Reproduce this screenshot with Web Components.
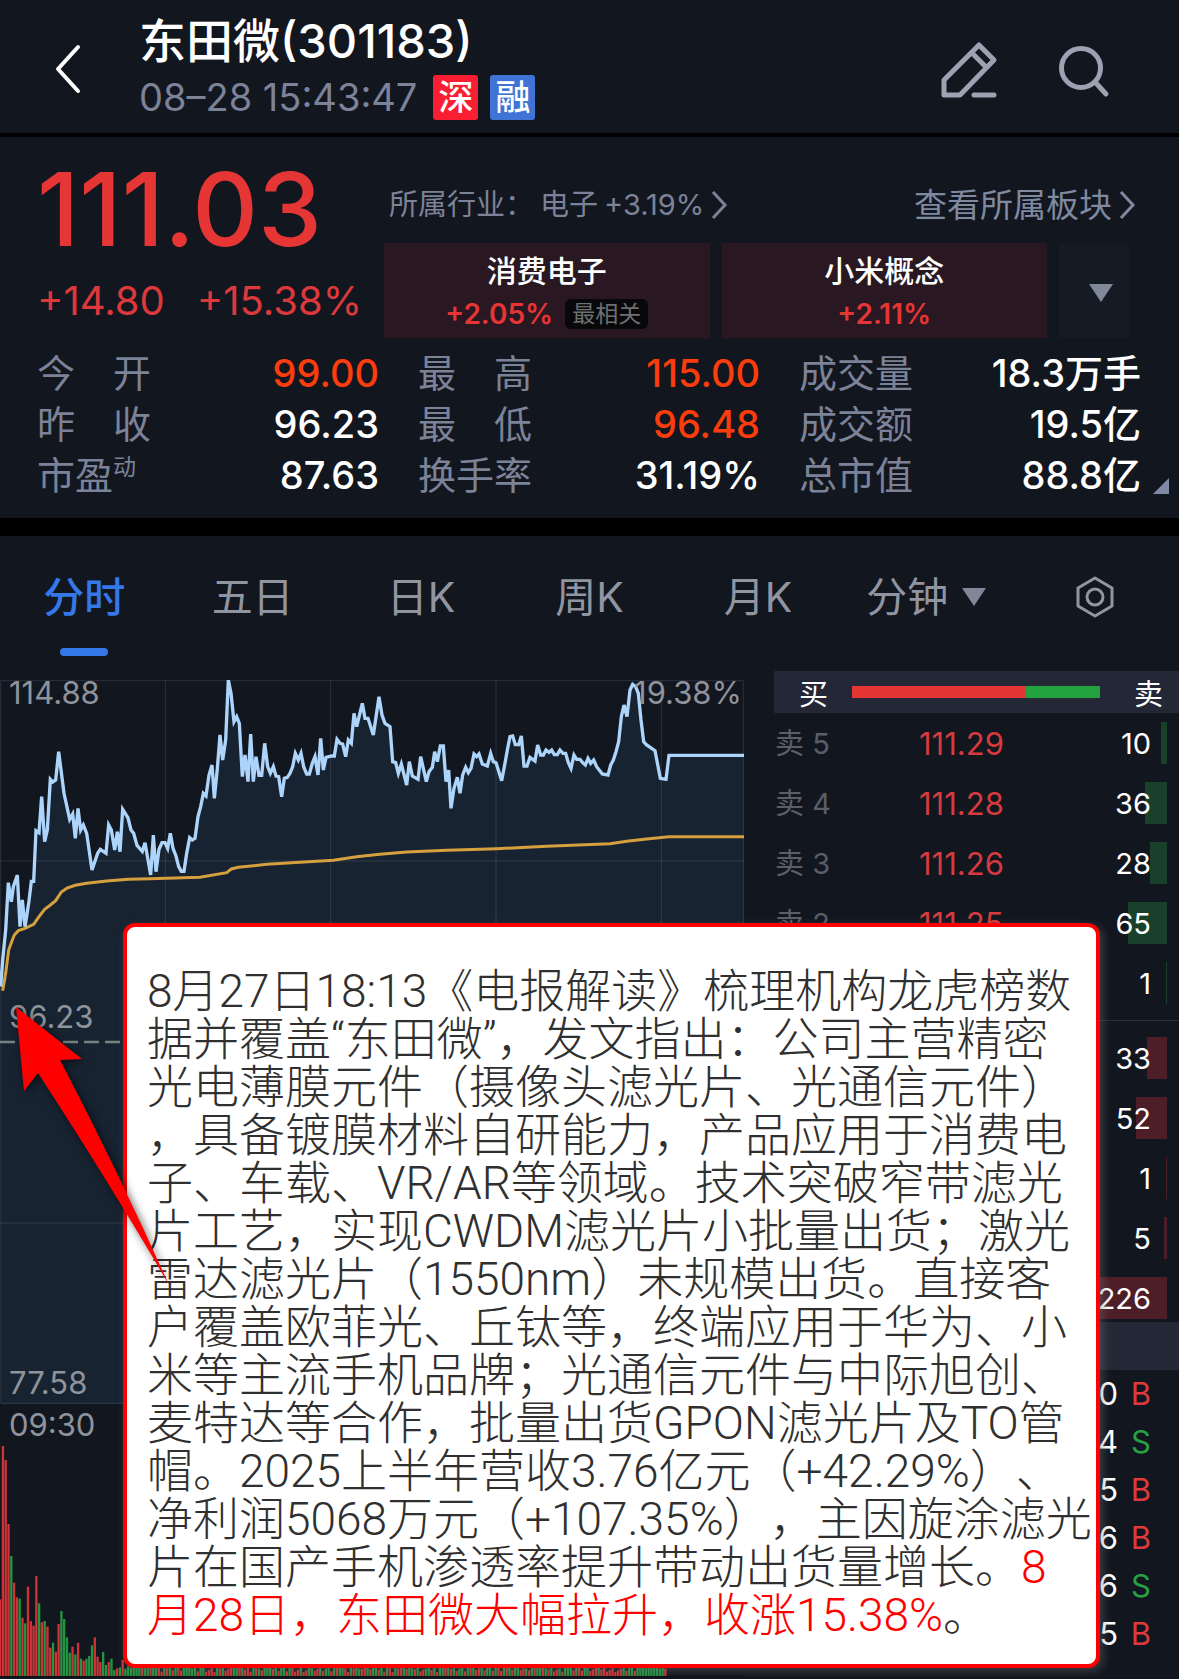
<!DOCTYPE html>
<html lang="zh-CN">
<head>
<meta charset="utf-8">
<meta name="viewport" content="width=device-width, initial-scale=1">
<title>东田微(301183)</title>
<style>
    body {
        margin: 0;
        min-height: 100vh;
        background: #12161f;
        color: #fff;
        font-family: Inter, "Noto Sans CJK SC", sans-serif;
        --up: #e53535;
        --down: #22a33f;
        --muted: #7c8297;
    }
</style>
</head>
<body>

<stock-page>
    <stock-header slot="header" name="东田微" code="301183" time="08–28 15:43:47">
        <market-badge>深</market-badge>
        <market-badge color="#3f74d6">融</market-badge>
    </stock-header>

    <price-panel slot="price" price="111.03" change="+14.80" percent="+15.38%">
        <sector-card name="消费电子" percent="+2.05%" tag="最相关"></sector-card>
        <sector-card name="小米概念" percent="+2.11%"></sector-card>
        <stat-item slot="stats" label="今　开" tone="up">99.00</stat-item>
        <stat-item slot="stats" label="最　高" tone="up">115.00</stat-item>
        <stat-item slot="stats" label="成交量">18.3万手</stat-item>
        <stat-item slot="stats" label="昨　收">96.23</stat-item>
        <stat-item slot="stats" label="最　低" tone="up">96.48</stat-item>
        <stat-item slot="stats" label="成交额">19.5亿</stat-item>
        <stat-item slot="stats" label="市盈" sup="动">87.63</stat-item>
        <stat-item slot="stats" label="换手率">31.19%</stat-item>
        <stat-item slot="stats" label="总市值">88.8亿</stat-item>
    </price-panel>

    <chart-tabs slot="tabs"></chart-tabs>
    <minute-chart slot="chart"></minute-chart>
    <order-book slot="book"></order-book>

    <note-callout slot="note">8月27日18:13《电报解读》梳理机构龙虎榜数
据并覆盖“东田微”，发文指出：公司主营精密
光电薄膜元件（摄像头滤光片、光通信元件）
，具备镀膜材料自研能力，产品应用于消费电
子、车载、VR/AR等领域。技术突破窄带滤光
片工艺，实现CWDM滤光片小批量出货；激光
雷达滤光片（1550nm）未规模出货。直接客
户覆盖欧菲光、丘钛等，终端应用于华为、小
米等主流手机品牌；光通信元件与中际旭创、
麦特达等合作，批量出货GPON滤光片及TO管
帽。2025上半年营收3.76亿元（+42.29%）、
净利润5068万元（+107.35%），主因旋涂滤光
片在国产手机渗透率提升带动出货量增长。<mark>8</mark>
<mark>月28日，东田微大幅拉升，收涨15.38%</mark>。</note-callout>
    <note-arrow slot="note"></note-arrow>
</stock-page>

<script>
(() => {

    function attach(el, html) {
        const template = document.createElement('template');
        template.innerHTML = html;
        el.attachShadow({mode: 'open'});
        el.shadowRoot.appendChild(template.content.cloneNode(true));
    }

    window.customElements.define('stock-page',

    class StockPage extends HTMLElement {
        constructor() {
            super();
            attach(this, `
                <style>
                    :host {
                        display: block;
                        position: relative;
                        overflow: hidden;
                    }
                    .panels {
                        display: grid;
                        grid-template-columns: minmax(0, 744fr) minmax(0, 405fr);
                        column-gap: 30px;
                    }
                </style>
                <slot name="header"></slot>
                <slot name="price"></slot>
                <slot name="tabs"></slot>
                <div class="panels">
                    <slot name="chart"></slot>
                    <slot name="book"></slot>
                </div>
                <slot name="note"></slot>
            `);
        }
    });

    window.customElements.define('market-badge',

    class MarketBadge extends HTMLElement {
        constructor() {
            super();
            attach(this, `
                <style>
                    :host {
                        display: block;
                        width: 45px;
                        border-radius: 3px;
                        background: ${this.getAttribute('color') || '#fa1e32'};
                        color: #fff;
                        font-size: 35px;
                        font-weight: 500;
                        line-height: 45px;
                        text-align: center;
                    }
                </style>
                <slot></slot>
            `);
        }
    });

    window.customElements.define('stock-header',

    class StockHeader extends HTMLElement {
        constructor() {
            super();
            attach(this, `
                <style>
                    :host {
                        display: flex;
                        align-items: center;
                        height: 133px;
                        padding: 0 67px 0 52px;
                        border-bottom: 4px solid #000;
                    }
                    button {
                        display: block;
                        padding: 0;
                        border: 0;
                        background: none;
                        color: #9ea1b1;
                    }
                    svg {
                        display: block;
                        fill: none;
                        stroke: currentColor;
                        stroke-width: 5;
                        stroke-linecap: round;
                        stroke-linejoin: round;
                    }
                    .back {
                        color: #fff;
                        margin-right: 55px;
                    }
                    .back svg {
                        stroke-width: 4;
                    }
                    .title {
                        flex: 1;
                    }
                    h1 {
                        margin: 0 0 6px;
                        font-size: 47px;
                        font-weight: 500;
                        line-height: 56px;
                    }
                    .sub {
                        display: flex;
                        align-items: center;
                        gap: 12px;
                    }
                    time {
                        margin-right: 4px;
                        color: var(--muted);
                        font-size: 38px;
                        line-height: 45px;
                    }
                    .edit {
                        margin-right: 58px;
                    }
                </style>
                <button class="back" aria-label="返回">
                    <svg width="32" height="56" viewBox="0 0 32 56"><path d="M26 8 6 30 26 52"/></svg>
                </button>
                <div class="title">
                    <h1>${this.getAttribute('name')}(${this.getAttribute('code')})</h1>
                    <div class="sub">
                        <time>${this.getAttribute('time')}</time>
                        <slot></slot>
                    </div>
                </div>
                <button class="edit" aria-label="编辑">
                    <svg width="58" height="64" viewBox="0 0 58 64"><path d="M4 60V45L39 10 54 25 20 60ZM32 18 46 32M34 60H54"/></svg>
                </button>
                <button aria-label="搜索">
                    <svg width="56" height="64" viewBox="0 0 56 64"><circle cx="25" cy="33" r="19.5"/><path d="M39 47 50 59"/></svg>
                </button>
            `);
        }
    });

    window.customElements.define('sector-card',

    class SectorCard extends HTMLElement {
        constructor() {
            super();
            const tag = this.getAttribute('tag');
            attach(this, `
                <style>
                    :host {
                        display: block;
                    }
                    a {
                        display: block;
                        height: 95px;
                        box-sizing: border-box;
                        padding-top: 8px;
                        background: #291822;
                        color: #fff;
                        font-size: 30px;
                        font-weight: 500;
                        line-height: 40px;
                        text-align: center;
                        text-decoration: none;
                    }
                    .row {
                        display: flex;
                        justify-content: center;
                        align-items: center;
                        gap: 12px;
                        height: 45px;
                        color: var(--up);
                        font-size: 28px;
                        font-weight: 600;
                    }
                    .tag {
                        padding: 0 7px;
                        border-radius: 6px;
                        background: #08070a;
                        color: #6d7071;
                        font-size: 23px;
                        font-weight: 400;
                        line-height: 30px;
                    }
                </style>
                <a href="#">
                    ${this.getAttribute('name')}
                    <div class="row"><span>${this.getAttribute('percent')}</span>${tag ? `<span class="tag">${tag}</span>` : ''}</div>
                </a>
            `);
        }
    });

    window.customElements.define('stat-item',

    class StatItem extends HTMLElement {
        constructor() {
            super();
            attach(this, `
                <style>
                    :host {
                        display: flex;
                        justify-content: space-between;
                        font-size: 38px;
                        line-height: 51px;
                    }
                    .label {
                        color: var(--muted);
                    }
                    sup {
                        font-size: 23px;
                        line-height: 0;
                    }
                    .value {
                        font-weight: 500;
                    }
                    :host([tone="up"]) .value {
                        color: #fb3c0c;
                    }
                </style>
                <span class="label">${this.getAttribute('label')}<sup>${this.getAttribute('sup') || ''}</sup></span>
                <span class="value"><slot></slot></span>
            `);
        }
    });

    window.customElements.define('price-panel',

    class PricePanel extends HTMLElement {
        constructor() {
            super();
            attach(this, `
                <style>
                    :host {
                        display: block;
                        position: relative;
                        padding: 22px 38px 17px 37px;
                        border-bottom: 18px solid #000;
                    }
                    .top {
                        display: grid;
                        grid-template-columns: 347px minmax(0, 1fr);
                        margin-bottom: 10px;
                    }
                    .price {
                        color: var(--up);
                        font-size: 102px;
                        font-weight: 500;
                        line-height: 100px;
                    }
                    .change {
                        display: flex;
                        gap: 32px;
                        margin-top: 12px;
                        color: #dd393c;
                        font-size: 40px;
                        line-height: 60px;
                    }
                    .links {
                        display: flex;
                        justify-content: space-between;
                        margin: 26px 5px 18px 5px;
                        line-height: 40px;
                    }
                    .links a {
                        display: flex;
                        align-items: center;
                        gap: 6px;
                        color: var(--muted);
                        text-decoration: none;
                        font-size: 29px;
                    }
                    .links .all {
                        color: #7f89a0;
                        font-size: 33px;
                    }
                    svg {
                        display: block;
                        fill: none;
                        stroke: currentColor;
                        stroke-width: 3;
                    }
                    .cards {
                        display: grid;
                        grid-template-columns: 1fr 1fr 70px;
                        gap: 12px;
                        margin-right: 12px;
                    }
                    .more {
                        display: flex;
                        align-items: center;
                        justify-content: center;
                        padding: 4px 0 0 14px;
                        border: 0;
                        background: #141b24;
                        color: #7f8798;
                    }
                    .more svg {
                        fill: currentColor;
                        stroke: none;
                    }
                    .stats {
                        display: grid;
                        grid-template-columns: repeat(3, minmax(0, 1fr));
                        column-gap: 39px;
                    }
                    .corner {
                        position: absolute;
                        right: 10px;
                        bottom: 24px;
                        border: 8px solid #8089a6;
                        border-left-color: transparent;
                        border-top-color: transparent;
                    }
                </style>
                <div class="top">
                    <div>
                        <div class="price">${this.getAttribute('price')}</div>
                        <div class="change"><span>${this.getAttribute('change')}</span><span>${this.getAttribute('percent')}</span></div>
                    </div>
                    <div>
                        <div class="links">
                            <a href="#"><span>所属行业：</span><span>电子</span><span>+3.19%</span>
                                <svg width="18" height="30" viewBox="0 0 18 30"><path d="M3 2 15 15 3 28"/></svg></a>
                            <a href="#" class="all"><span>查看所属板块</span>
                                <svg width="18" height="30" viewBox="0 0 18 30"><path d="M3 2 15 15 3 28"/></svg></a>
                        </div>
                        <div class="cards">
                            <slot></slot>
                            <button class="more" aria-label="展开"><svg width="26" height="20" viewBox="0 0 26 20"><path d="M1 1H25L13 19Z"/></svg></button>
                        </div>
                    </div>
                </div>
                <div class="stats"><slot name="stats"></slot></div>
                <span class="corner"></span>
            `);
        }
    });

    window.customElements.define('chart-tabs',

    class ChartTabs extends HTMLElement {
        constructor() {
            super();
            attach(this, `
                <style>
                    :host {
                        display: grid;
                        grid-template-columns: repeat(7, minmax(0, 1fr));
                        height: 135px;
                    }
                    button {
                        display: flex;
                        justify-content: center;
                        align-items: center;
                        gap: 14px;
                        height: 122px;
                        padding: 0;
                        border: 0;
                        background: none;
                        color: #9195a1;
                        font: inherit;
                        font-size: 41px;
                        line-height: 60px;
                        white-space: nowrap;
                    }
                    button.active {
                        position: relative;
                        color: #3478ea;
                        font-weight: 500;
                    }
                    button.active::after {
                        content: "";
                        position: absolute;
                        bottom: 2px;
                        width: 48px;
                        height: 8px;
                        border-radius: 4px;
                        background: #3478ea;
                    }
                    svg {
                        fill: none;
                        stroke: currentColor;
                        stroke-width: 3;
                        stroke-linejoin: round;
                    }
                    .arrow {
                        fill: #7f8798;
                        stroke: none;
                    }
                </style>
                <button class="active">分时</button>
                <button>五日</button>
                <button>日K</button>
                <button>周K</button>
                <button>月K</button>
                <button>分钟<svg class="arrow" width="24" height="20" viewBox="0 0 24 20"><path d="M0 1H24L12 19Z"/></svg></button>
                <button aria-label="设置"><svg width="42" height="44" viewBox="0 0 42 44"><path d="M21 3 38 13V31L21 41 4 31V13Z"/><circle cx="21" cy="22" r="8"/></svg></button>
            `);
        }
    });

    const PRICE = '2,980 8,900 17,810 25,668 34,725 40,680 52,645 60,800 67,720 75,800 86,730 94,664 101,664 108,512 117,518 125,410 134,545 142,510 151,358 158,366 167,360 176,275 192,400 209,478 218,462 226,535 234,445 242,510 250,495 260,520 276,630 293,580 301,568 318,580 326,495 334,510 344,570 352,515 360,575 368,448 384,474 393,510 401,520 411,556 427,574 435,548 452,645 460,525 468,635 477,568 486,548 495,548 503,565 511,520 519,565 528,588 536,620 544,634 552,634 560,580 569,533 577,540 585,535 594,470 602,440 610,400 618,408 627,345 636,315 643,415 652,325 660,225 668,300 677,240 685,60 693,100 702,185 710,170 718,190 727,350 735,285 744,365 752,222 760,365 768,290 777,346 785,346 794,250 803,320 811,340 820,320 828,348 836,350 845,410 853,355 862,352 870,340 878,320 886,280 895,300 903,280 911,320 920,342 928,342 937,310 945,290 954,345 962,235 970,330 978,292 995,288 1003,288 1011,238 1020,250 1028,252 1037,290 1045,240 1054,250 1062,160 1070,200 1087,130 1095,175 1104,175 1120,225 1137,110 1146,165 1155,190 1170,200 1178,305 1187,308 1195,340 1204,312 1220,375 1228,305 1237,348 1254,358 1262,290 1279,365 1287,335 1297,322 1304,275 1312,305 1321,258 1330,258 1338,365 1346,330 1353,445 1362,385 1372,352 1380,400 1388,345 1397,322 1405,338 1413,325 1422,282 1430,290 1437,282 1447,312 1462,318 1472,280 1480,305 1488,308 1505,362 1514,315 1522,270 1530,230 1538,228 1546,254 1556,254 1564,228 1572,318 1581,318 1590,292 1605,303 1613,255 1622,285 1630,285 1638,270 1647,277 1655,270 1663,284 1672,284 1680,270 1689,280 1697,280 1705,308 1713,325 1722,285 1730,298 1740,298 1748,308 1756,315 1764,295 1772,310 1781,300 1790,320 1807,342 1824,345 1832,315 1840,300 1848,275 1856,245 1864,170 1872,135 1881,170 1890,90 1898,73 1907,80 1915,100 1923,180 1931,245 1940,255 1965,272 1981,355 1998,358 2007,286 2232,286';
    const AVERAGE = '8,992 17,940 26,870 35,845 43,825 55,812 75,805 101,793 117,770 134,748 151,735 167,722 184,696 201,684 226,676 260,670 320,663 384,658 450,656 600,652 680,638 694,627 715,622 800,613 1000,601 1070,590 1140,583 1220,576 1340,571 1490,566 1640,559 1830,551 1880,544 1940,537 2007,530 2232,530';

    // bar heights in chart units, r = up minute, g = down minute
    const VOLUME = 'r230 r690 r648 r456 g360 r280 r236 g232 r175 g158 r268 r165 r151 r300 g218 r161 g165 r148 r85 g100 r73 r156 g195 g171 g116 g70 r88 g65 r100 g52 r46 g52 g60 g92 r116 r58 r42 g72 g33 r42 g52 g18 r23 g26 r48'.split(' ');
    const REST = 'ggggggrggrggrrgrgrgrrgggggrggrrrrgrgrrrggrgrrrgrgrgggrgrggrgrrrgrrggrrgrggrgrggrrgrggrrgrggrgrgrrgrrgrggrgrrggrgrggrgrgrggrgrgrrgrggrgrrgrgrggrrgrgrggrgrgrrgrgggrgrrggrrrgrrrrrrrrgrggrggggggggggr';
    [...REST].forEach((c, i) => VOLUME.push(c + (c === 'g' ? 22 + i * 7 % 12 : 12 + i * 5 % 16)));

    window.customElements.define('minute-chart',

    class MinuteChart extends HTMLElement {
        constructor() {
            super();
            attach(this, `
                <style>
                    :host {
                        display: block;
                        position: relative;
                        margin-top: 9px;
                        color: #8f939c;
                        font-size: 31px;
                        line-height: 30px;
                    }
                    svg {
                        display: block;
                        width: 100%;
                    }
                    .price {
                        height: 724px;
                    }
                    .volume {
                        height: 272px;
                        border-bottom: 1px solid #090c12;
                    }
                    .grid {
                        fill: none;
                        stroke: #a8bdd0;
                        stroke-opacity: .16;
                        stroke-width: 3;
                    }
                    span {
                        position: absolute;
                        left: 9px;
                    }
                    .high, .percent {
                        top: -2px;
                    }
                    span.percent {
                        left: auto;
                        right: 2px;
                    }
                    .close {
                        top: 322px;
                    }
                    .low {
                        top: 688px;
                    }
                    .start {
                        top: 730px;
                    }
                </style>
                <svg class="price" viewBox="0 60 2232 2172" preserveAspectRatio="none">
                    <path fill="#172331" d="M2 2232V980L${PRICE}V2232Z"/>
                    <path class="grid" d="M2 62H2230V2230H2ZM496 60V2232M992 60V2232M1488 60V2232M1984 60V2232M0 603H2232M0 1689H2232"/>
                    <path fill="none" stroke="#76837f" stroke-width="7" stroke-dasharray="45 18" d="M0 1146H2232"/>
                    <polyline fill="none" stroke="#d6a03e" stroke-width="9" points="${AVERAGE}"/>
                    <polyline fill="none" stroke="#add5fb" stroke-width="10" points="${PRICE}"/>
                </svg>
                <svg class="volume" viewBox="0 0 2232 816" preserveAspectRatio="none"></svg>
                <span class="high">114.88</span>
                <span class="percent">19.38%</span>
                <span class="close">96.23</span>
                <span class="low">77.58</span>
                <span class="start">09:30</span>
            `);
            this.shadowRoot.querySelector('.volume').innerHTML = VOLUME.map((bar, i) => {
                const height = +bar.slice(1);
                const color = bar[0] === 'r' ? '#cf3336' : '#239540';
                return `<rect x="${i * 8.35 - 3}" y="${816 - height}" width="7" height="${height}" fill="${color}"/>`;
            }).join('');
        }
    });

    // label, price, lots, depth bar width
    const SELLS = [['卖 5', '111.29', 10, 6], ['卖 4', '111.28', 36, 22], ['卖 3', '111.26', 28, 17], ['卖 2', '111.25', 65, 39], ['', '', 1, 1]];
    const BUYS = [['', '', 33, 20], ['', '', 52, 31], ['', '', 1, 1], ['', '', 5, 3], ['', '', 226, 136]];
    const TRADES = [[0, 'B'], [4, 'S'], [5, 'B'], [6, 'B'], [6, 'S'], [5, 'B']];

    window.customElements.define('order-book',

    class OrderBook extends HTMLElement {
        constructor() {
            super();
            attach(this, `
                <style>
                    :host {
                        display: block;
                        font-size: 29px;
                    }
                    .ratio {
                        display: flex;
                        align-items: center;
                        height: 42px;
                        padding: 0 16px 0 25px;
                        margin-bottom: 9px;
                        background: #242836;
                    }
                    .bar {
                        flex: 1;
                        height: 12px;
                        margin: 0 34px 0 24px;
                        background: linear-gradient(to right, var(--up) 70%, var(--down) 70%);
                    }
                    table {
                        width: 100%;
                        border-spacing: 0;
                        table-layout: fixed;
                    }
                    td {
                        height: 60px;
                        padding: 0;
                        line-height: 44px;
                        vertical-align: top;
                    }
                    .depth tr:last-child td {
                        height: 42px;
                    }
                    .label {
                        width: 120px;
                        padding-left: 1px;
                        color: #5a5e68;
                    }
                    .quote {
                        width: 170px;
                        color: #d83a3d;
                        font-size: 31px;
                        text-indent: 24px;
                    }
                    .lots {
                        padding-right: 12px;
                    }
                    .lots div {
                        height: 42px;
                        padding-right: 16px;
                        text-align: right;
                        background: linear-gradient(var(--tone), var(--tone)) right / var(--depth) 100% no-repeat;
                    }
                    .sell {
                        --tone: #18402b;
                    }
                    .buy {
                        --tone: #4e1e28;
                        margin: 16px 0 3px;
                        padding-top: 16px;
                        border-top: 1px solid #2a2f38;
                    }
                    .band {
                        height: 48px;
                        background: #242836;
                    }
                    .trades td {
                        height: 48px;
                        padding-right: 12px;
                        font-size: 31px;
                        line-height: 48px;
                        text-align: right;
                    }
                    .trades td + td {
                        width: 21px;
                        padding-right: 28px;
                    }
                    .B { color: #dd3a3d; }
                    .S { color: #27a144; }
                </style>
                <div class="ratio"><span>买</span><div class="bar"></div><span>卖</span></div>
                <div class="depth sell"><table>${this.rows(SELLS)}</table></div>
                <div class="depth buy"><table>${this.rows(BUYS)}</table></div>
                <div class="band"></div>
                <table class="trades">${TRADES.map(([lots, side]) => `<tr><td>${lots}</td><td class="${side}">${side}</td></tr>`).join('')}</table>
            `);
        }

        rows(list) {
            return list.map(([label, price, lots, depth]) => `
                <tr>
                    <td class="label">${label}</td>
                    <td class="quote">${price}</td>
                    <td class="lots"><div style="--depth: ${depth}px">${lots}</div></td>
                </tr>
            `).join('');
        }
    });

    window.customElements.define('note-callout',

    class NoteCallout extends HTMLElement {
        constructor() {
            super();
            attach(this, `
                <style>
                    :host {
                        display: block;
                        position: absolute;
                        top: 923px;
                        left: 123px;
                        right: 79px;
                        box-sizing: border-box;
                        padding: 40px 0 25px 20px;
                        border: 4px solid #f00;
                        border-radius: 12px;
                        background: #fff;
                        box-shadow: 3px 3px 10px rgba(110, 110, 110, .45);
                        color: #303030;
                        font-family: Roboto, "Noto Sans CJK SC", sans-serif;
                        font-size: 46px;
                        font-weight: 300;
                        line-height: 48px;
                        text-spacing-trim: space-all;
                    }
                    .text {
                        white-space: pre;
                    }
                    ::slotted(mark) {
                        background: none;
                        color: #f00;
                    }
                </style>
                <div class="text"><slot></slot></div>
            `);
        }
    });

    window.customElements.define('note-arrow',

    class NoteArrow extends HTMLElement {
        constructor() {
            super();
            attach(this, `
                <style>
                    :host {
                        position: absolute;
                        top: 1007px;
                        left: 16px;
                    }
                    svg {
                        display: block;
                        overflow: visible;
                        fill: #f00;
                        filter: drop-shadow(2px 2px 4px rgba(0, 0, 0, .6));
                    }
                </style>
                <svg width="153" height="278" viewBox="0 0 153 278"><path d="M0 0 66 52 44 53Q104 168 153 278 96 180 22 66L8 84Z"/></svg>
            `);
        }
    });

})();
</script>
</body>
</html>
